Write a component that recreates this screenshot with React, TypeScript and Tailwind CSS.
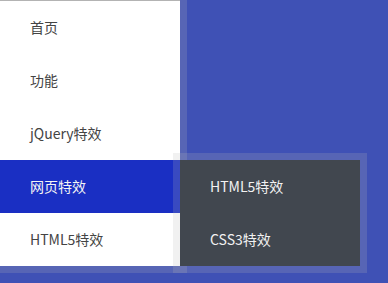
import { useState } from "react";

const menu = ["首页", "功能", "jQuery特效", "网页特效", "HTML5特效"];
const subMenu = ["HTML5特效", "CSS3特效"];

export default function App() {
  const [active] = useState(3);

  return (
    <div
      className="relative h-[283px] w-[388px] overflow-hidden bg-[#3f51b5] text-[14px]"
      style={{ fontFamily: '"Noto Sans CJK SC", "Noto Sans", sans-serif' }}
    >
      <ul className="w-[187px] border-r-[7px] border-b-[7px] border-[rgba(183,183,183,0.2)] bg-white bg-clip-padding">
        {menu.map((item, i) => (
          <li
            key={item}
            className={
              i === active
                ? "flex h-[53px] items-center bg-[#1a2fc3] pl-[30px] text-[#f4f4f4]"
                : i === 0
                  ? "flex h-[54px] items-center border-t border-[#b3b3b3] pl-[30px] text-[#444]"
                  : "flex h-[53px] items-center pl-[30px] text-[#444]"
            }
          >
            {item}
          </li>
        ))}
      </ul>

      <ul className="absolute left-[173px] top-[153px] w-[194px] border-[7px] border-[rgba(183,183,183,0.2)] bg-[#41474f] bg-clip-padding">
        {subMenu.map((item) => (
          <li key={item} className="flex h-[53px] items-center pl-[30px] text-[#f2f2f2]">
            {item}
          </li>
        ))}
      </ul>
    </div>
  );
}
